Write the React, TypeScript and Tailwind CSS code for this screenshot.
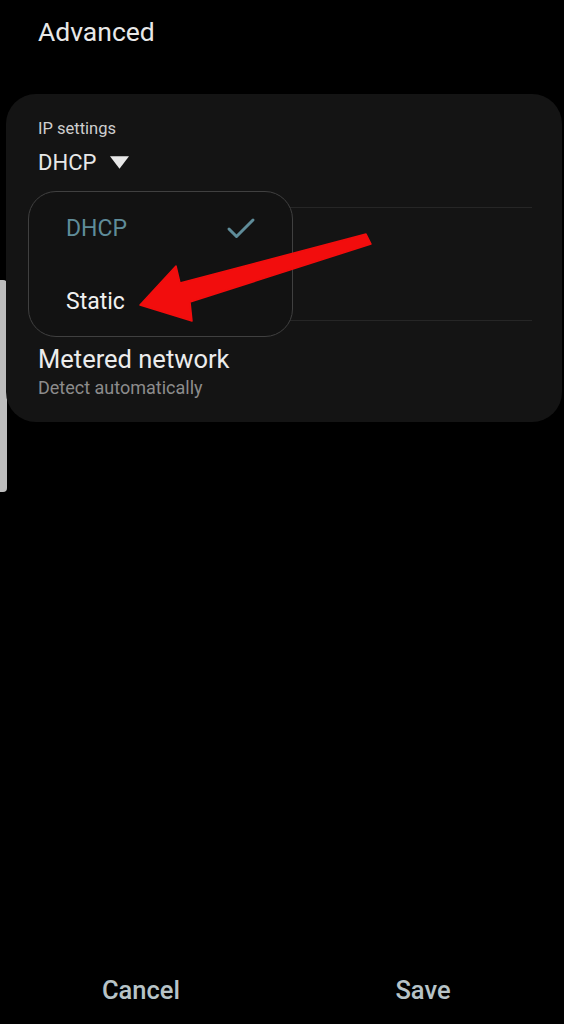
import { Check } from "lucide-react";

const font = { fontFamily: "Roboto, 'Noto Sans', sans-serif" };

function Divider() {
  return <div className="h-px bg-[#262626] ml-[32px] mr-[30px]" />;
}

export default function App() {
  return (
    <main
      className="relative h-[1024px] w-full bg-black text-[#e6e6e6] flex flex-col overflow-hidden"
      style={font}
    >
      {/* scroll indicator */}
      <div className="absolute left-0 top-[280px] h-[212px] w-[7px] rounded-r-[4px] bg-[#bdbdbd]" />

      <h1 className="pl-[38px] pt-[15px] h-[94px] text-[26.5px] leading-[34px] text-[#e8e8e8]">
        Advanced
      </h1>

      <section className="relative ml-[6px] mr-[2px] rounded-[30px] bg-[#141414] h-[328px]">
        <div className="pl-[32px] pt-[25px]">
          <p className="text-[16.5px] leading-[20px] text-[#cfcfcf]">IP settings</p>
          <div className="mt-[9px] flex items-center gap-[14px] h-[28px]">
            <span className="text-[22px] text-[#e8e8e8]">DHCP</span>
            <svg width="19" height="13" viewBox="0 0 18 12">
              <path d="M0 0h18L9 12z" fill="#e8e8e8" />
            </svg>
          </div>
        </div>
        <div className="mt-[31px]">
          <Divider />
          <div className="h-[112px]" />
          <Divider />
        </div>
        <div className="pl-[32px] pt-[23px]">
          <p className="text-[25.5px] leading-[30px] text-[#ececec]">Metered network</p>
          <p className="mt-[2px] text-[18px] leading-[24px] text-[#8c8c8c]">Detect automatically</p>
        </div>

        {/* dropdown menu */}
        <div className="absolute left-[22px] top-[97px] w-[265px] h-[146px] rounded-[28px] border border-[#404040] bg-[#121212] flex flex-col gap-[37px] pt-[19px]">
          <div className="flex items-center justify-between h-[36px] pl-[37px] pr-[33px]">
            <span className="text-[23px] text-[#5f8c99]">DHCP</span>
            <Check size={36} strokeWidth={2} className="text-[#5f8c99]" />
          </div>
          <div className="flex items-center h-[36px] pl-[37px]">
            <span className="text-[23px] text-[#f0f0f0]">Static</span>
          </div>
        </div>
      </section>

      {/* pointer arrow */}
      <svg
        className="absolute left-0 top-0 pointer-events-none"
        width="564"
        height="1024"
        viewBox="0 0 564 1024"
      >
        <path
          d="M140 305 L176 266 L180 283 L366 234 L371 244 L190 302 L192 321 Z"
          fill="#f20d0d"
          stroke="#f20d0d"
          strokeWidth="1.5"
          strokeLinejoin="round"
        />
      </svg>

      <footer className="mt-auto h-[68px] flex items-center">
        <button className="w-1/2 text-[25.5px] font-medium text-[#b7c3c7]">Cancel</button>
        <button className="w-1/2 text-[25.5px] font-medium text-[#b7c3c7]">Save</button>
      </footer>
    </main>
  );
}
